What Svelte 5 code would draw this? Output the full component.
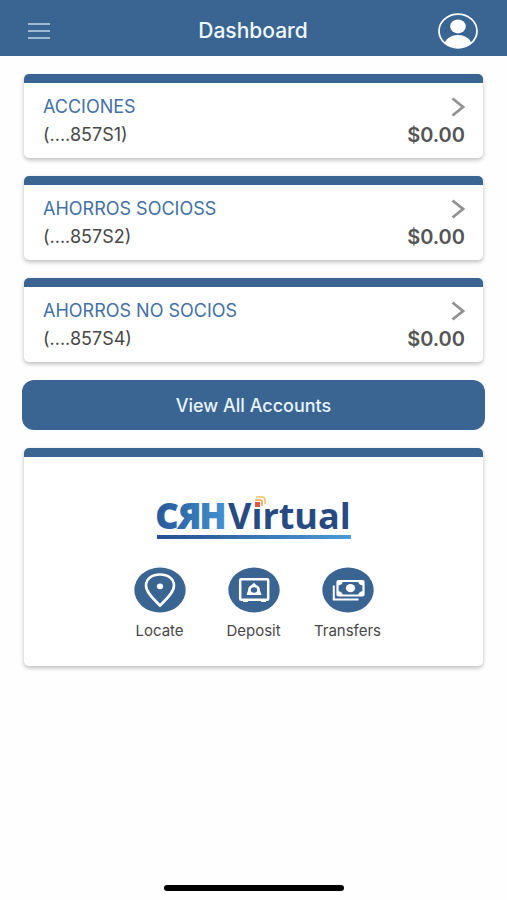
<script lang="ts">
	interface Account {
		name: string;
		number: string;
		balance: string;
	}

	const accounts: Account[] = [
		{ name: 'ACCIONES', number: '(....857S1)', balance: '$0.00' },
		{ name: 'AHORROS SOCIOSS', number: '(....857S2)', balance: '$0.00' },
		{ name: 'AHORROS NO SOCIOS', number: '(....857S4)', balance: '$0.00' }
	];

	const shortcuts = ['Locate', 'Deposit', 'Transfers'];
</script>

<div class="app">
	<header class="topbar">
		<button class="icon-button" aria-label="Menu">
			<svg width="22" height="18" viewBox="0 0 22 18" stroke="#c3d6ea" stroke-width="1.7">
				<path d="M0 2h22M0 9h22M0 16h22" />
			</svg>
		</button>
		<h1>Dashboard</h1>
		<button class="icon-button" aria-label="Profile">
			<svg width="40" height="36" viewBox="0 0 40 36">
				<clipPath id="profile-clip"><ellipse cx="20" cy="18" rx="18.5" ry="16.5" /></clipPath>
				<g fill="#fff" clip-path="url(#profile-clip)">
					<ellipse cx="20" cy="13.4" rx="7.8" ry="7" />
					<ellipse cx="20" cy="32" rx="13.5" ry="10" />
				</g>
				<ellipse cx="20" cy="18" rx="19" ry="16.8" fill="none" stroke="#fff" stroke-width="1.7" />
			</svg>
		</button>
	</header>

	<main>
		<ul class="accounts">
			{#each accounts as account}
				<li class="card">
					<a class="account" href="#account">
						<span class="name">{account.name}</span>
						<svg class="chevron" width="14" height="20" viewBox="0 0 14 20" aria-hidden="true">
							<path d="M1.5 1.5L12 10L1.5 18.5" fill="none" stroke="#929292" stroke-width="2.8" />
						</svg>
						<span class="number">{account.number}</span>
						<strong class="balance">{account.balance}</strong>
					</a>
				</li>
			{/each}
		</ul>

		<button class="view-all">View All Accounts</button>

		<section class="card virtual">
			<svg class="logo" width="196" height="46" viewBox="0 0 196 46" aria-label="CRH Virtual">
				<defs>
					<linearGradient id="logo-blue" gradientUnits="userSpaceOnUse" x1="2" y1="0" x2="68" y2="0">
						<stop offset="0" stop-color="#265a9b" />
						<stop offset="1" stop-color="#438fce" />
					</linearGradient>
					<linearGradient id="logo-mirror" gradientUnits="userSpaceOnUse" x1="-68" y1="0" x2="-2" y2="0">
						<stop offset="0" stop-color="#438fce" />
						<stop offset="1" stop-color="#265a9b" />
					</linearGradient>
					<linearGradient id="logo-rule" x1="0" x2="1">
						<stop offset="0" stop-color="#254f91" />
						<stop offset="1" stop-color="#4a9bd6" />
					</linearGradient>
				</defs>
				<g class="crh">
					<text x="0" y="33" fill="url(#logo-blue)" stroke="url(#logo-blue)">C</text>
					<text x="-45" y="33" fill="url(#logo-mirror)" stroke="url(#logo-mirror)" transform="scale(-1 1)">R</text>
					<text x="44" y="33" fill="url(#logo-blue)" stroke="url(#logo-blue)">H</text>
				</g>
				<text class="word" x="72" y="34">Virtual</text>
				<rect x="96" y="0" width="12" height="13" fill="#fff" />
				<rect x="99" y="7" width="5" height="5" fill="#e2573f" />
				<path d="M99 5h5q2 0 2 2V11" fill="none" stroke="#f0a052" stroke-width="1.6" />
				<path d="M100 2h6q3 0 3 3V9" fill="none" stroke="#f4c469" stroke-width="1.6" />
				<rect x="1" y="40" width="194" height="4" fill="url(#logo-rule)" />
			</svg>

			<nav class="shortcuts">
				{#each shortcuts as shortcut}
					<a class="shortcut" href="#{shortcut}">
						<svg width="52" height="46" viewBox="0 0 52 46" fill="none" stroke="#fff" aria-hidden="true">
							<ellipse cx="26" cy="23" rx="25.7" ry="22.5" fill="#3a6593" stroke="none" />
							{#if shortcut === 'Locate'}
								<path
									d="M26 38.5C20 32.5 12 25.5 12 18.5C12 11.8 18 7.5 26 7.5S40 11.8 40 18.5C40 25.5 32 32.5 26 38.5Z"
									stroke-width="2.6"
								/>
								<ellipse cx="26" cy="19.3" rx="3.2" ry="2.9" fill="#fff" stroke="none" />
							{:else if shortcut === 'Deposit'}
								<rect x="12.2" y="12.2" width="28" height="20.5" rx="1" stroke-width="2.5" />
								<path d="M15 33h5v2h-5zM33 33h5v2h-5z" fill="#fff" stroke="none" />
								<path
									d="M26 15.7L28 17.8Q32 19.5 32 23.5L33.5 28H18.5L20 23.5Q20 19.5 24 17.8Z"
									fill="#fff"
									stroke="none"
								/>
								<ellipse cx="26" cy="23" rx="3.2" ry="2.8" fill="#3a6593" stroke="none" />
							{:else}
								<path d="M11.8 18.5V32.5H36.5" stroke-width="2" />
								<rect x="15.5" y="14" width="26" height="14.5" rx="1" stroke-width="2.2" />
								<path
									d="M16 14h5q-.5 4-5 4.5zM41 14h-5q.5 4 5 4.5zM16 28.5h5q-.5-4-5-4.5zM41 28.5h-5q.5-4 5-4.5z"
									fill="#fff"
									stroke="none"
								/>
								<ellipse cx="28.5" cy="21.2" rx="4.6" ry="4.1" fill="#fff" stroke="none" />
							{/if}
						</svg>
						<span>{shortcut}</span>
					</a>
				{/each}
			</nav>
		</section>
	</main>

	<div class="home-indicator"></div>
</div>

<style>
	:global(body) {
		margin: 0;
		background: #fefefe;
	}

	.app {
		display: flex;
		flex-direction: column;
		min-height: 100vh;
		font-family: Inter, 'Liberation Sans', sans-serif;
		color: #484848;
	}

	.topbar {
		display: grid;
		grid-template-columns: 40px 1fr 40px;
		align-items: center;
		height: 56px;
		padding: 5px 29px 0 28px;
		box-sizing: border-box;
		background: #3a6593;
	}

	h1 {
		margin: 0;
		font-size: 21px;
		font-weight: 500;
		line-height: 28px;
		text-align: center;
		color: #f1f7fd;
	}

	button {
		border: 0;
		padding: 0;
		background: none;
		font-family: inherit;
		cursor: pointer;
	}

	.icon-button {
		display: flex;
	}

	main {
		display: flex;
		flex-direction: column;
		gap: 18px;
		padding: 18px 22px;
	}

	.accounts {
		display: flex;
		flex-direction: column;
		gap: 18px;
		margin: 0;
		padding: 0;
		list-style: none;
	}

	.card {
		margin: 0 2px;
		border-top: 9px solid #3a6593;
		border-radius: 5px;
		background: #fff;
		box-shadow: 0 2px 4px rgba(0, 0, 0, 0.26);
	}

	.account {
		display: grid;
		grid-template-columns: 1fr auto;
		align-items: center;
		padding: 10px 18px 9px 19px;
		font-size: 18px;
		line-height: 28px;
		color: inherit;
		text-decoration: none;
	}

	.name {
		color: #4370a5;
	}

	.chevron {
		justify-self: end;
	}

	.balance {
		font-size: 20px;
		font-weight: 600;
		color: #555;
	}

	.view-all {
		height: 50px;
		border-radius: 12px;
		background: #3a6593;
		font-size: 18px;
		font-weight: 500;
		color: #e9f3fd;
	}

	.virtual {
		display: flex;
		flex-direction: column;
		align-items: center;
		gap: 26px;
		padding: 38px 0 25px;
	}

	.logo {
		overflow: visible;
	}

	.crh {
		font-family: 'Open Sans', sans-serif;
		font-size: 34px;
		font-weight: 700;
		stroke-width: 2;
	}

	.word {
		font-family: 'Open Sans', sans-serif;
		font-size: 36px;
		font-weight: 700;
		fill: #274a82;
	}

	.shortcuts {
		display: grid;
		grid-template-columns: repeat(3, 94px);
	}

	.shortcut {
		display: flex;
		flex-direction: column;
		align-items: center;
		gap: 8px;
		font-size: 15px;
		line-height: 20px;
		color: inherit;
		text-decoration: none;
	}

	.home-indicator {
		width: 180px;
		height: 6px;
		margin: auto auto 9px;
		border-radius: 3px;
		background: #000;
	}
</style>
